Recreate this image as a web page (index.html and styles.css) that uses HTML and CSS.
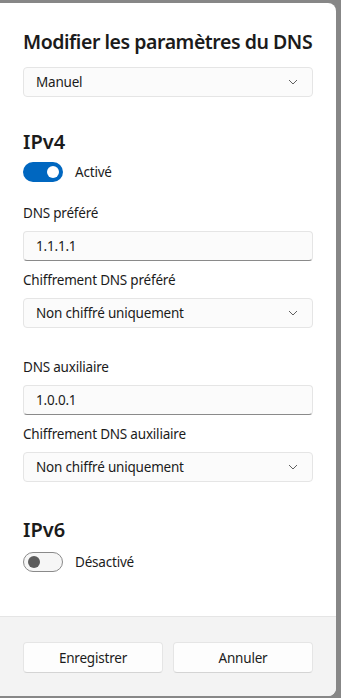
FILE: index.html
```html
<!DOCTYPE html>
<html lang="fr">
<head>
  <meta charset="UTF-8" />
  <meta name="viewport" content="width=device-width, initial-scale=1.0" />
  <title>Modifier les paramètres du DNS</title>
  <link rel="stylesheet" href="styles.css">
</head>
<body>
  <div class="dialog">
    <div class="content">
      <h1 class="title">Modifier les paramètres du DNS</h1>

      <div class="select mode">
        <span>Manuel</span>
        <svg class="chevron" width="10" height="6" viewBox="0 0 10 6"><path d="M1 1 L5 5 L9 1" fill="none" stroke="#606060" stroke-width="1"/></svg>
      </div>

      <h2 class="section">IPv4</h2>
      <div class="toggle-row">
        <span class="toggle on"><span class="knob"></span></span>
        <span class="toggle-label">Activé</span>
      </div>

      <div class="label first">DNS préféré</div>
      <div class="input">1.1.1.1</div>

      <div class="label">Chiffrement DNS préféré</div>
      <div class="select">
        <span>Non chiffré uniquement</span>
        <svg class="chevron" width="10" height="6" viewBox="0 0 10 6"><path d="M1 1 L5 5 L9 1" fill="none" stroke="#606060" stroke-width="1"/></svg>
      </div>

      <div class="label group">DNS auxiliaire</div>
      <div class="input">1.0.0.1</div>

      <div class="label">Chiffrement DNS auxiliaire</div>
      <div class="select">
        <span>Non chiffré uniquement</span>
        <svg class="chevron" width="10" height="6" viewBox="0 0 10 6"><path d="M1 1 L5 5 L9 1" fill="none" stroke="#606060" stroke-width="1"/></svg>
      </div>

      <h2 class="section v6">IPv6</h2>
      <div class="toggle-row off-row">
        <span class="toggle off"><span class="knob"></span></span>
        <span class="toggle-label">Désactivé</span>
      </div>
    </div>

    <div class="footer">
      <button type="button" class="btn">Enregistrer</button>
      <button type="button" class="btn">Annuler</button>
    </div>
  </div>
</body>
</html>
```

FILE: styles.css
```css
body {
  margin: 0;
  background: #878787;
  font-family: 'Noto Sans', sans-serif;
  color: #1b1b1b;
  height: 698px;
  overflow: hidden;
}

.dialog {
  margin-top: 3px;
  width: 336px;
  height: 693px;
  background: #ffffff;
  border-radius: 0 8px 8px 0;
  display: flex;
  flex-direction: column;
  overflow: hidden;
}

.content {
  flex: 1;
  padding: 25px 23px 0 23px;
}

.title {
  margin: 0;
  font-size: 19.5px;
  letter-spacing: -0.45px;
  line-height: 28px;
  font-weight: 600;
  white-space: nowrap;
}

.select,
.input {
  box-sizing: border-box;
  width: 290px;
  height: 30px;
  margin-top: 8px;
  padding: 0 12px;
  background: #fbfbfb;
  border: 1px solid #e5e5e5;
  border-radius: 4px;
  font-size: 13.5px;
  letter-spacing: -0.2px;
  display: flex;
  align-items: center;
}

.select {
  justify-content: space-between;
}

.select .chevron {
  margin-right: 2px;
}

.mode {
  margin-top: 11px;
}

.input {
  border-bottom: 1px solid #8a8a8a;
}

.section {
  margin: 31px 0 0 0;
  font-size: 20px;
  line-height: 28px;
  font-weight: 600;
}

.section.v6 {
  margin-top: 34px;
}

.toggle-row {
  display: flex;
  align-items: center;
  margin-top: 6px;
  height: 20px;
}

.off-row {
  margin-top: 8px;
}

.toggle {
  box-sizing: border-box;
  width: 40px;
  height: 20px;
  border-radius: 10px;
  display: flex;
  align-items: center;
  padding: 0 4px;
}

.toggle .knob {
  width: 12px;
  height: 12px;
  border-radius: 50%;
}

.toggle.on {
  background: #0067c0;
  justify-content: flex-end;
}

.toggle.on .knob {
  background: #ffffff;
}

.toggle.off {
  border: 1px solid #8a8a8a;
  background: #f6f6f6;
}

.toggle.off .knob {
  background: #5c5c5c;
}

.toggle-label {
  margin-left: 12px;
  font-size: 13.5px;
  letter-spacing: -0.2px;
}

.label {
  margin-top: 9px;
  font-size: 13.5px;
  letter-spacing: -0.2px;
  line-height: 20px;
}

.label.first {
  margin-top: 21px;
}

.label.group {
  margin-top: 29px;
}

.footer {
  height: 54px;
  flex-shrink: 0;
  border-top: 1px solid #e5e5e5;
  background: #f3f3f3;
  padding: 25px 23px 0 23px;
  display: flex;
  gap: 10px;
  align-items: flex-start;
}

.btn {
  flex: 1;
  height: 31px;
  background: #fdfdfd;
  border: 1px solid #e5e5e5;
  border-bottom-color: #d4d4d4;
  border-radius: 4px;
  font-family: 'Noto Sans', sans-serif;
  font-size: 13.5px;
  letter-spacing: -0.2px;
  color: #1b1b1b;
}
```
